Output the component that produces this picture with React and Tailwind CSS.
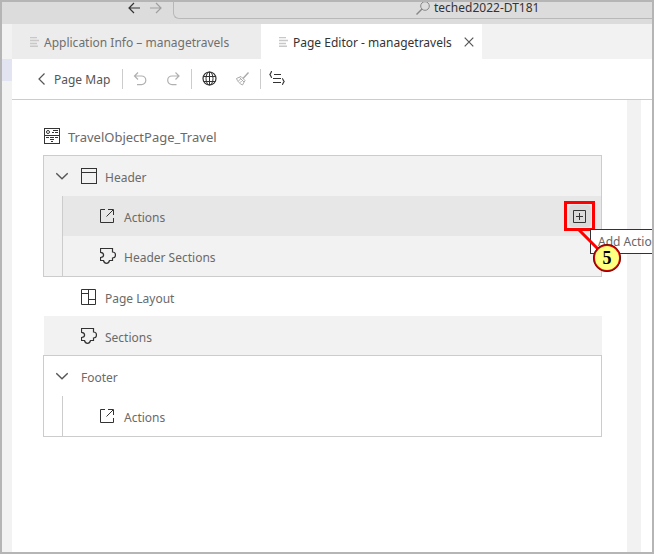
import React from "react";

function Icon({ children, size = 16, className = "" }) {
  return (
    <svg
      width={size}
      height={size}
      viewBox={`0 0 ${size} ${size}`}
      fill="none"
      stroke="currentColor"
      strokeWidth="1"
      aria-hidden="true"
      className={`shrink-0 ${className}`}
    >
      {children}
    </svg>
  );
}

const LinesIcon = ({ className }) => (
  <Icon size={10} className={className}>
    <path d="M0 .5h7M0 3.5h9M0 6.5h7M0 9.3h8" strokeWidth="1.6" />
  </Icon>
);

const BackArrow = () => (
  <Icon size={12}>
    <path d="M12 6H1M6 1L1 6l5 5" strokeWidth="1.2" />
  </Icon>
);

const ForwardArrow = () => (
  <Icon size={12}>
    <path d="M0 6h11M6 1l5 5-5 5" strokeWidth="1.2" />
  </Icon>
);

const SearchIcon = () => (
  <Icon size={14}>
    <circle cx="9" cy="5" r="4.3" />
    <path d="M6 8l-5.5 5.5" strokeWidth="1.4" />
  </Icon>
);

const CloseIcon = () => (
  <Icon size={10}>
    <path d="M.7.7l8.6 8.6M9.3.7L.7 9.3" strokeWidth="1.2" />
  </Icon>
);

const ChevronLeft = () => (
  <Icon size={12}>
    <path d="M8.5.5L3 6l5.5 5.5" strokeWidth="1.2" />
  </Icon>
);

const ChevronDown = () => (
  <Icon size={12} className="text-[#555555]">
    <path d="M.3 3.3L6 8.8l5.7-5.5" strokeWidth="1.3" />
  </Icon>
);

const UndoIcon = () => (
  <Icon>
    <path d="M5 1.5L1.500 5 5 8.500M1.500 5H8.500a4.300 4.300 0 0 1 0 8.600H4" strokeWidth="1.200" />
  </Icon>
);

const RedoIcon = () => (
  <Icon>
    <path d="M10.500 1.500L14 5 10.500 8.500M14 5H7a4.300 4.300 0 0 0 0 8.600h4.500" strokeWidth="1.200" />
  </Icon>
);

const GlobeIcon = () => (
  <Icon>
    <circle cx="7.5" cy="7.5" r="6.5" strokeWidth="1.2" />
    <ellipse cx="7.5" cy="7.5" rx="3.5" ry="6.5" />
    <path d="M1.5 5.5h12M1.5 10.5h12M7.5 1v13" />
  </Icon>
);

const BroomIcon = () => (
  <Icon>
    <path d="M14.500 1.500L9 7.500" strokeWidth="1.400" />
    <path d="M7 5.500l4 4-2.500 4.500C5.500 12.500 3.500 10.500 2.500 7.500zM5.500 6.500l4.500 4.500M4.500 9.500l2-1M6.500 11.500l1-1.500" />
  </Icon>
);

const CodeListIcon = () => (
  <Icon>
    <path d="M3 .5C1.5.5 2.5 3 .5 3.5c2 .5 1 3 2.500 3M13 7.500c1.500 0 .500 2.500 2.500 3-2 .500-1 3-2.500 3" strokeWidth="1.200" />
    <path d="M5 3.500h7M4 7.500h8M4 11.500h8" strokeWidth="1.200" />
  </Icon>
);

const ObjectPageIcon = () => (
  <Icon className="text-[#333333]">
    <rect x=".5" y=".5" width="15" height="15" />
    <circle cx="4" cy="4" r="1.5" />
    <path d="M9 2.5h5M8 4.5h2M11 4.5h3M1 7.5h14M2 9.5h3M6 9.5h4M11 9.5h3M6 11.5h4M7 13.5h2" />
  </Icon>
);

const HeaderIcon = () => (
  <Icon className="text-[#333333]">
    <rect x=".5" y=".5" width="15" height="15" />
    <path d="M1 4.5h14" />
  </Icon>
);

const ActionIcon = () => (
  <Icon className="text-[#333333]">
    <path d="M5 1.5H.5v13h13V10M8 1.5h5.500V7M13 2L6.500 8.500" />
  </Icon>
);

const PuzzleIcon = () => (
  <Icon className="text-[#333333]">
    <path
      d="M.5.5H12.500V4C14.500 4 15.500 5.300 15.500 7S14.500 10 12.500 10v2.500H9.500C9 14.500 8 15.300 6.500 15.300S4 14.500 3.500 12.500H.5V9.500C2.800 9.300 3.600 8.300 3.600 7S2.800 4.500.5 4.300z"
      strokeWidth="1.200"
    />
  </Icon>
);

const LayoutIcon = () => (
  <Icon className="text-[#333333]">
    <path d="M.5.5h14v15H.5zM7.500.5v15M.5 4.500h7M7.500 10.500h7" />
  </Icon>
);

const AddIcon = () => (
  <Icon size={13}>
    <path d="M.5.5h12v12H.5zM6.500 3v7M3 6.500h7" />
  </Icon>
);

function Divider() {
  return <span className="h-5 w-px bg-[#cccccc]" />;
}

function TitleBar() {
  return (
    <header className="flex h-[22px] overflow-hidden bg-[#dcdcdc]">
      <div className="flex h-3 w-[171px] shrink-0 justify-end gap-2.5 pr-[11px]">
        <button type="button" aria-label="Go back" className="text-[#333333]">
          <BackArrow />
        </button>
        <button type="button" aria-label="Go forward" className="text-[#a0a0a0]">
          <ForwardArrow />
        </button>
      </div>
      <button
        type="button"
        className="flex h-[17px] grow items-center gap-1 rounded-bl-md border-b border-l border-[#b8b8b8] pb-1 pl-[242px] text-xs leading-3 text-[#333333]"
      >
        <span className="text-[#888888]">
          <SearchIcon />
        </span>
        teched2022-DT181
      </button>
    </header>
  );
}

function Tabs() {
  return (
    <div role="tablist" className="flex h-[35px] bg-[#f2f2f2] text-xs">
      <button
        type="button"
        role="tab"
        aria-selected="false"
        className="flex w-[249px] items-center gap-1 bg-[#ececec] pl-[18px] text-[#6f6f6f]"
      >
        <LinesIcon className="text-[#c8c8c8]" />
        <span className="pt-0.5">Application Info – managetravels</span>
      </button>
      <div className="flex w-[221px] items-center gap-3 bg-white pl-[18px] text-[#333333]">
        <button type="button" role="tab" aria-selected="true" className="flex items-center gap-1">
          <LinesIcon className="text-[#c8c8c8]" />
          <span className="pt-0.5">Page Editor - managetravels</span>
        </button>
        <button type="button" aria-label="Close tab" className="text-[#555555]">
          <CloseIcon />
        </button>
      </div>
    </div>
  );
}

function Toolbar() {
  return (
    <div
      role="toolbar"
      aria-label="Page editor"
      className="flex h-[41px] items-center border-b border-[#cccccc] pl-6 text-[#333333]"
    >
      <button type="button" className="flex w-[86px] items-center gap-1.5 text-xs text-[#555555]">
        <ChevronLeft />
        <span className="pt-0.5">Page Map</span>
      </button>
      <Divider />
      <div className="flex w-[68px] justify-between px-2.5 text-[#b0b0b0]">
        <button type="button" aria-label="Undo"><UndoIcon /></button>
        <button type="button" aria-label="Redo"><RedoIcon /></button>
      </div>
      <Divider />
      <div className="flex w-[68px] justify-between px-2.5">
        <button type="button" aria-label="Translate"><GlobeIcon /></button>
        <button type="button" aria-label="Clean up" className="text-[#aaaaaa]"><BroomIcon /></button>
      </div>
      <Divider />
      <button type="button" aria-label="Show source" className="pl-2"><CodeListIcon /></button>
    </div>
  );
}

function Row({ icon, label, className = "h-10", children }) {
  return (
    <div role="treeitem" className={`flex items-center gap-2 ${className}`}>
      {icon}
      <span className="pt-1">{label}</span>
      {children}
    </div>
  );
}

function AddAction() {
  return (
    <div className="relative mr-1.5 ml-auto">
      <button
        type="button"
        aria-label="Add Actions"
        aria-describedby="add-tip"
        className="flex h-[30px] w-[31px] items-center justify-center border-3 border-[#ff0000] text-[#333333]"
      >
        <span className="flex size-[22px] items-center justify-center rounded-sm bg-[#dadada]">
          <AddIcon />
        </span>
      </button>
      <div
        id="add-tip"
        role="tooltip"
        className="absolute top-7 left-[26px] flex h-[25px] w-20 items-center border border-[#333333] bg-white pl-[7px] text-xs whitespace-nowrap text-[#666666]"
      >
        Add Actions
      </div>
      <svg
        className="absolute top-7 left-3"
        width="26"
        height="26"
        viewBox="0 0 26 26"
        aria-hidden="true"
      >
        <path d="M2 0l20 20" stroke="#ff0000" strokeWidth="3" />
      </svg>
      <span className="absolute top-[43px] left-[29px] flex size-7 items-center justify-center rounded-full border-2 border-[#e60000] bg-[#ffff80] font-['Liberation_Serif',serif] text-lg font-bold text-black outline-1 -outline-offset-1 outline-[#661111]">
        5
      </span>
    </div>
  );
}

function PageTree() {
  return (
    <main className="min-w-0 grow pt-[17px] pr-[25px] pl-[31px] text-xs text-[#6a6a6a]">
      <div role="tree" aria-label="Page outline">
        <Row icon={<ObjectPageIcon />} label="TravelObjectPage_Travel" className="h-[38px] pl-px text-[13px]" />
        <div className="border border-[#cccccc] bg-[#f2f2f2]">
          <div className="flex items-center gap-[13px] pl-3">
            <ChevronDown />
            <Row icon={<HeaderIcon />} label="Header" />
          </div>
          <div role="group" className="ml-[18px] border-l border-[#cccccc]">
            <Row icon={<ActionIcon />} label="Actions" className="h-10 bg-[#e7e7e7] pl-[37px]">
              <AddAction />
            </Row>
            <Row icon={<PuzzleIcon />} label="Header Sections" className="h-10 pl-[37px]" />
          </div>
        </div>
        <Row icon={<LayoutIcon />} label="Page Layout" className="h-[39px] pl-[38px]" />
        <Row icon={<PuzzleIcon />} label="Sections" className="ml-px h-[39px] bg-[#f2f2f2] pl-[37px]" />
        <div className="border border-[#cccccc] bg-white">
          <div className="flex items-center gap-[13px] pl-3">
            <ChevronDown />
            <Row label="Footer" />
          </div>
          <div role="group" className="ml-[18px] border-l border-[#cccccc]">
            <Row icon={<ActionIcon />} label="Actions" className="h-10 pl-[37px]" />
          </div>
        </div>
      </div>
    </main>
  );
}

export default function App() {
  return (
    <div className="flex min-h-screen flex-col overflow-hidden border-2 border-[#b5b5b5] bg-white font-['Noto_Sans','Open_Sans',sans-serif]">
      <TitleBar />
      <div className="flex grow">
        <aside className="w-2.5 shrink-0 bg-[#f2f2f2] pt-[35px]">
          <div className="h-[22px] bg-[#e2e5f1]" />
        </aside>
        <div className="flex min-w-0 grow flex-col">
          <Tabs />
          <Toolbar />
          <div className="flex grow">
            <PageTree />
            <div className="mr-[11px] w-3.5 shrink-0 bg-[#f2f2f2]" />
          </div>
        </div>
      </div>
    </div>
  );
}
